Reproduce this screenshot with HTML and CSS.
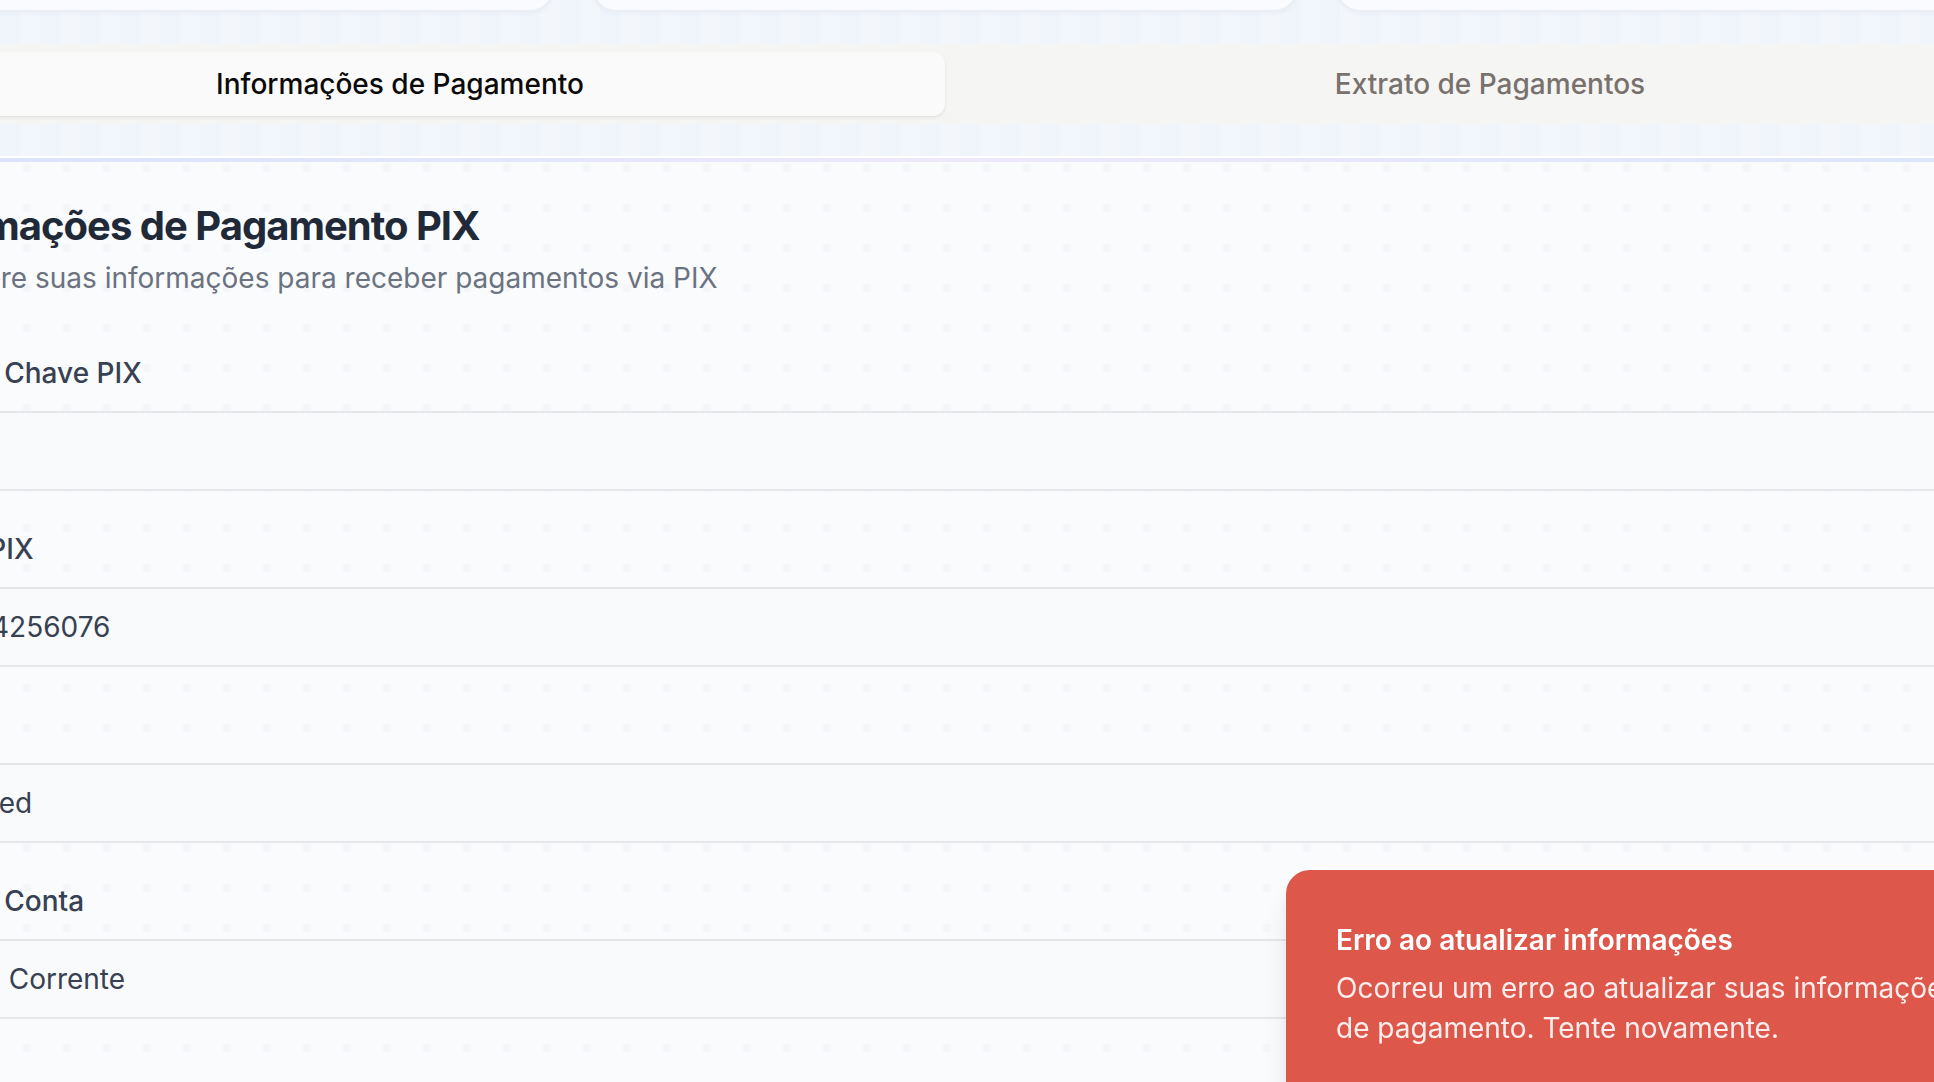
FILE: index.html
```html
<!DOCTYPE html>
<html lang="pt-BR">
<head>
<meta charset="utf-8">
<title>Informações de Pagamento</title>
<link rel="stylesheet" href="styles.css">
</head>
<body>
<div class="page">
  <div class="stats">
    <div class="stat-card">
      <span class="stat-label">Total Recebido</span>
      <span class="stat-value">R$ 0,00</span>
    </div>
    <div class="stat-card">
      <span class="stat-label">Pendente</span>
      <span class="stat-value">R$ 0,00</span>
    </div>
    <div class="stat-card">
      <span class="stat-label">Último Pagamento</span>
      <span class="stat-value">—</span>
    </div>
  </div>

  <div class="tabs">
    <button class="tab tab-active">Informações de Pagamento</button>
    <button class="tab">Extrato de Pagamentos</button>
  </div>

  <section class="card">
    <div class="card-accent"></div>
    <div class="card-body">
      <h2 class="card-title">Informações de Pagamento PIX</h2>
      <p class="card-desc">Configure suas informações para receber pagamentos via PIX</p>
      <form class="form">
        <div class="field">
          <label class="field-label">Tipo de Chave PIX</label>
          <div class="field-input">CPF</div>
        </div>
        <div class="field">
          <label class="field-label">Chave PIX</label>
          <div class="field-input">06824256076</div>
        </div>
        <div class="field">
          <label class="field-label">Banco</label>
          <div class="field-input">Bancred</div>
        </div>
        <div class="field">
          <label class="field-label">Tipo de Conta</label>
          <div class="field-input">Conta Corrente</div>
        </div>
      </form>
    </div>
  </section>
</div>

<div class="toast" role="alert">
  <div class="toast-title">Erro ao atualizar informações</div>
  <div class="toast-desc">Ocorreu um erro ao atualizar suas informações de pagamento. Tente novamente.</div>
</div>
</body>
</html>
```

FILE: styles.css
```css
* { box-sizing: border-box; }

html, body {
  margin: 0;
  padding: 0;
}

body {
  width: 1934px;
  height: 1082px;
  overflow: hidden;
  font-family: Inter, "Noto Sans", "Liberation Sans", sans-serif;
  background-color: #f3f6fb;
  background-image: repeating-linear-gradient(90deg, rgba(228, 236, 249, 0.22) 0 20px, rgba(255, 255, 255, 0) 20px 40px);
}

.page {
  width: 2196px;
  margin-left: -153px;
  margin-top: -168px;
  display: flex;
  flex-direction: column;
  gap: 32px;
}

/* top stat cards */
.stats {
  display: grid;
  grid-template-columns: repeat(3, 1fr);
  gap: 38px;
}

.stat-card {
  height: 180px;
  background: #f9fbfe;
  border: 2px solid #ebeff5;
  border-radius: 24px;
  box-shadow: 0 2px 4px rgba(30, 50, 90, 0.035);
  padding: 24px 48px;
  display: flex;
  flex-direction: column;
  gap: 8px;
}

.stat-label {
  font-size: 28px;
  color: #6b7280;
}

.stat-value {
  font-size: 40px;
  font-weight: 700;
  color: #1f2937;
}

/* tabs */
.tabs {
  display: grid;
  grid-template-columns: 1fr 1fr;
  height: 80px;
  padding: 8px;
  background: #f5f5f4;
  border-radius: 12px;
}

.tab {
  border: none;
  background: transparent;
  font-family: inherit;
  font-size: 28px;
  line-height: 40px;
  font-weight: 500;
  color: #78716c;
  border-radius: 12px;
  padding: 0;
}

.tab-active {
  background: #fafafa;
  color: #0c0a09;
  box-shadow: 0 2px 4px rgba(0, 0, 0, 0.06), 0 1px 2px rgba(0, 0, 0, 0.04);
}

/* main card */
.card {
  border-top: 2px solid #ffffff;
  background-color: #f9fbfd;
  background-image: radial-gradient(circle, #f4f6fa 0 4px, rgba(255, 255, 255, 0) 5px);
  background-size: 40px 40px;
  background-position: 0 -10px;
  min-height: 1000px;
}

.card-accent {
  height: 4px;
  background: linear-gradient(90deg, #d9e2fb 0%, #e3e6fb 30%, #eee8fb 50%, #e6e7fb 70%, #dbe5fa 100%);
}

.card-body {
  padding: 40px 49px 48px;
}

.card-title {
  margin: 0;
  font-size: 40px;
  line-height: 48px;
  font-weight: 700;
  color: #1f2937;
  letter-spacing: -1px;
}

.card-desc {
  margin: 8px 0 0;
  font-size: 28px;
  line-height: 40px;
  color: #6b7280;
}

.form {
  margin-top: 61px;
  display: flex;
  flex-direction: column;
  gap: 44px;
}

.field {
  display: flex;
  flex-direction: column;
  gap: 24px;
}

.field-label {
  font-size: 28px;
  line-height: 28px;
  font-weight: 500;
  color: #374151;
}

.field-input {
  height: 80px;
  border: 2px solid #e5e7eb;
  border-radius: 12px;
  background: #f9fafb;
  padding: 0 24px;
  display: flex;
  align-items: center;
  font-size: 28px;
  color: #374151;
}

/* toast */
.toast {
  position: fixed;
  left: 1286px;
  top: 870px;
  width: 840px;
  min-height: 260px;
  padding: 48px 64px 48px 48px;
  background: #dd574b;
  border: 2px solid #dd574b;
  border-radius: 24px;
  color: #ffffff;
  box-shadow: 0 20px 30px -6px rgba(0, 0, 0, 0.12), 0 8px 14px -4px rgba(0, 0, 0, 0.08);
}

.toast-title {
  font-size: 28px;
  line-height: 40px;
  font-weight: 600;
}

.toast-desc {
  margin-top: 8px;
  max-width: 640px;
  font-size: 28px;
  line-height: 40px;
  opacity: 0.9;
}
```
